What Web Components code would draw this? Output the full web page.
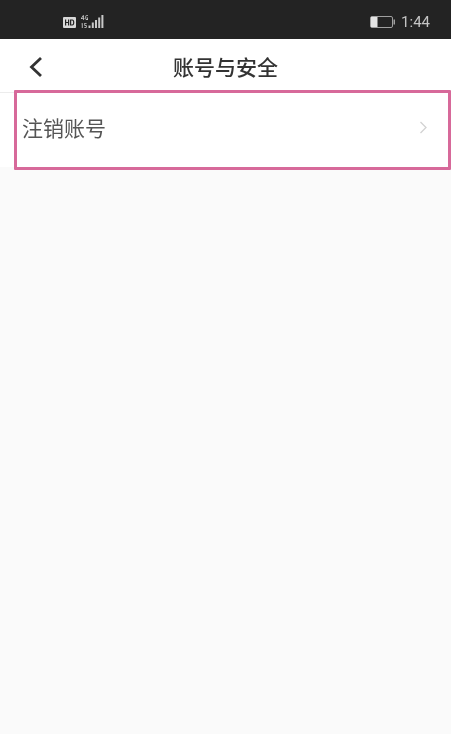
<!DOCTYPE html>
<html lang="zh">
<head>
<meta charset="utf-8">
<title>账号与安全</title>
<style>
html, body { margin: 0; height: 100%; background: #fff; }
body { font-family: "Noto Sans CJK SC", "Liberation Sans", sans-serif; overflow: hidden; }
</style>
</head>
<body>
<account-screen>
  <status-bar slot="status" time="1:44"></status-bar>
  <nav-bar slot="nav" title="账号与安全"></nav-bar>
  <menu-row>注销账号</menu-row>
</account-screen>

<script>
function createElement(name, styles, template) {
    customElements.define(name, class extends HTMLElement {
        connectedCallback() {
            const shadow = this.attachShadow({ mode: 'open' });
            shadow.innerHTML = `<style>${styles}</style>` + template(this);
        }
    });
}

createElement('status-bar', `
    :host { display: flex; align-items: center; box-sizing: border-box; height: 39px; background: #232323; color: #c4c4c4;
            padding: 5px 21px 0 63px; font-family: Roboto, "Liberation Sans", sans-serif; }
    .net { display: flex; align-items: center; gap: 5px; }
    .right { margin-left: auto; display: flex; align-items: center; gap: 6px; }
    svg { display: block; }
    span { font-size: 15px; line-height: 15px; }
`, (el) => `
    <div class="net">
      <svg width="13" height="11" viewBox="0 0 13 11">
        <path fill="#d8d8d8" fill-rule="evenodd" d="M1 0h11a1 1 0 0 1 1 1v9a1 1 0 0 1-1 1H1a1 1 0 0 1-1-1V1a1 1 0 0 1 1-1zM2 2.500v6h1.200V6h1.800v2.500h1.200v-6H5V5H3.200V2.500zM7 2.500v6h2.300c1.300 0 2-1.200 2-3s-.7-3-2-3zM8.200 3.500h1c.6 0 .9.800.9 2s-.3 2-.9 2h-1z"/>
      </svg>
      <svg width="23" height="14" viewBox="0 0 23 14">
        <g fill="#c8c8c8">
          <path d="M0 3.200 2 .300h.9v2.900h.6v.7h-.6v1h-.8v-1H0zM.9 3.200h1.200V1.500z"/>
          <path d="M7 .300H5.600C4.700.300 4.300 1 4.300 2.500s.4 2.400 1.300 2.400H7V2.400H5.700v.7h.5v1h-.5c-.4 0-.6-.5-.6-1.600S5.300 1 5.700 1H7z"/>
          <path d="M.5 8.500 1.700 8v5H.8V9.200l-.3.100zM3.300 8h2.300v.8H4.100v1.200h.6c.7 0 1.100.5 1.100 1.400S5.300 13 4.500 13H3.300v-.8h1.100c.4 0 .6-.3.600-.8s-.2-.7-.6-.7H3.300z"/>
          <rect x="7.500" y="10.500" width="2" height="2.500"/>
          <rect x="10.800" y="7.500" width="2" height="5.500"/>
          <rect x="14" y="5" width="2" height="8"/>
          <rect x="17.200" y="2.500" width="2" height="10.500"/>
          <rect x="20.400" y="0" width="2" height="13"/>
        </g>
      </svg>
    </div>
    <div class="right">
      <svg width="25" height="12" viewBox="0 0 25 12">
        <rect x=".5" y=".5" width="22" height="11" rx="1.500" fill="none" stroke="#a0a0a0"/>
        <rect x="1" y="1" width="6.500" height="10" fill="#e4e4e4"/>
        <rect x="23.500" y="3.500" width="1.500" height="5" fill="#a0a0a0"/>
      </svg>
      <span>${el.getAttribute('time')}</span>
    </div>
`);

createElement('nav-bar', `
    :host { display: flex; align-items: center; justify-content: center; position: relative; box-sizing: border-box;
            height: 54px; background: #fff; border-bottom: 1px solid #ececec; }
    h1 { margin: 0; font-size: 21px; line-height: 56px; font-weight: 500; color: #333; }
    svg { position: absolute; left: 28px; top: 17px; }
`, (el) => `
    <svg width="15" height="22" viewBox="0 0 15 22">
      <path d="M13 2 3.500 11 13 20" fill="none" stroke="#333" stroke-width="2.800"/>
    </svg>
    <h1>${el.getAttribute('title')}</h1>
`);

createElement('menu-row', `
    :host { display: flex; align-items: center; box-sizing: border-box; height: 74px; background: #fff;
            padding: 0 23px 6px 22px; font-size: 21px; color: #555; }
    svg { margin-left: auto; }
`, () => `
    <slot></slot>
    <svg width="9" height="13" viewBox="0 0 9 13">
      <path d="M1.500 1 7 6.500 1.500 12" fill="none" stroke="#d2d2d2" stroke-width="1.300"/>
    </svg>
`);

createElement('account-screen', `
    :host { display: block; position: relative; width: 451px; height: 734px; background: #fafafa; filter: blur(.45px); }
    .mark { position: absolute; left: 14px; top: 90px; width: 431px; height: 74px;
            border: 3px solid #d7699a; border-radius: 1px; pointer-events: none; }
`, () => `
    <slot name="status"></slot>
    <slot name="nav"></slot>
    <slot></slot>
    <div class="mark"></div>
`);
</script>
</body>
</html>
